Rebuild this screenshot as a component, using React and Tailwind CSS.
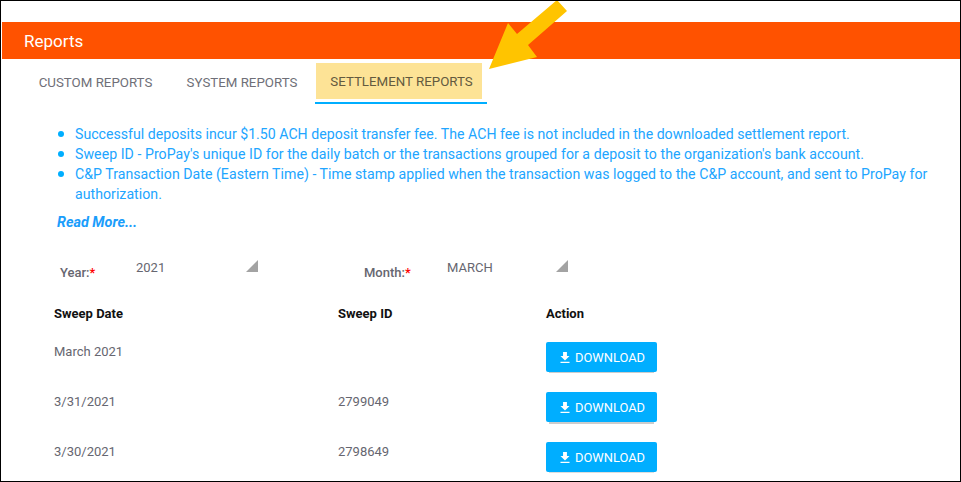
import React from "react";

const font = "font-['Roboto','Liberation_Sans',sans-serif]";

function DownloadButton({ shadow }) {
  return (
    <button className={`flex h-[30px] w-[111px] items-center justify-center gap-[5px] rounded-[2px] bg-[#00aeff] pl-[2px] pt-[1px] text-[12.9px] text-white ${shadow}`}>
      <svg width="10" height="11" viewBox="5 3 14 17" fill="white" aria-hidden="true">
        <path d="M19 9h-4V3H9v6H5l7 7 7-7zM5 18v2h14v-2H5z" />
      </svg>
      <span>DOWNLOAD</span>
    </button>
  );
}

const rows = [
  { date: "March 2021", id: "", shadow: "shadow-[0_4px_0_-3px_#cccccc]" },
  { date: "3/31/2021", id: "2799049", shadow: "shadow-[0_5px_0_-3px_#cccccc]" },
  { date: "3/30/2021", id: "2798649", shadow: "shadow-[0_4px_0_-3px_#dddddd]" },
];

function Bullet({ tracking, children }) {
  return (
    <li className={`flex ${tracking}`}>
      <span className="mr-[11.5px] mt-[7px] h-[5.5px] w-[5.5px] shrink-0 rounded-full bg-[#00aeff]" />
      <span>{children}</span>
    </li>
  );
}

export default function App() {
  return (
    <div className={`relative h-[482px] w-[961px] overflow-hidden border border-black bg-white ${font}`}>
      <span className="absolute left-[22px] top-[-1px] h-[1px] w-[4px] bg-[#b8b8c8]" />
      <div className="ml-[1px] mt-[21px] flex h-[37px] items-center bg-[#ff5200] pl-[22px] pt-[3px] text-[17px] text-white">Reports</div>

      <div className="flex h-[45px] pl-[21px] text-[13.3px] text-[#6f6f78]">
        <div className="flex w-[147px] items-center justify-center pt-[3px]">CUSTOM REPORTS</div>
        <div className="flex w-[146px] items-center justify-center pt-[3px]">SYSTEM REPORTS</div>
        <div className="flex w-[172px] flex-col items-start">
          <div className="ml-[1px] mt-[4px] flex h-[36px] w-[166px] items-center justify-center bg-[#fde396] pl-[5px] pt-[1px] text-[#635a3f]">SETTLEMENT REPORTS</div>
          <div className="mt-[3px] h-[2px] w-full bg-[#00aeff]" />
        </div>
      </div>

      <ul className="mt-[20px] pl-[57px] pr-[24px] text-[14.13px] leading-[20px] text-[#21a5ff]">
        <Bullet tracking="tracking-[0.01px]">Successful deposits incur $1.50 ACH deposit transfer fee. The ACH fee is not included in the downloaded settlement report.</Bullet>
        <Bullet tracking="tracking-[0.045px]">Sweep ID - ProPay's unique ID for the daily batch or the transactions grouped for a deposit to the organization's bank account.</Bullet>
        <Bullet tracking="tracking-[0.03px]">C&amp;P Transaction Date (Eastern Time) - Time stamp applied when the transaction was logged to the C&amp;P account, and sent to ProPay for authorization.</Bullet>
      </ul>

      <div className="mt-[9px] pl-[56px] text-[14.4px] font-bold italic leading-[20px] text-[#1a9dfb]">Read More...</div>

      <div className="mt-[25px] flex h-[46px] text-[13px]">
        <div className="mt-[5px] w-[77px] whitespace-nowrap pl-[59px] font-medium text-[#666670]">
          Year:<span className="text-[#f00]">*</span>
        </div>
        <div className="relative ml-[58px] w-[122px] text-[#666670]">
          2021
          <span className="absolute right-[0px] top-[2px] h-0 w-0 border-b-[12px] border-l-[12px] border-b-[#a3a3a3] border-l-transparent" />
        </div>
        <div className="ml-[106px] mt-[5px] w-[48px] whitespace-nowrap font-medium text-[#666670]">
          Month:<span className="text-[#f00]">*</span>
        </div>
        <div className="relative ml-[34px] w-[122px] pl-[1px] text-[#666670]">
          MARCH
          <span className="absolute right-[0px] top-[2px] h-0 w-0 border-b-[12px] border-l-[12px] border-b-[#a3a3a3] border-l-transparent" />
        </div>
      </div>

      <div className="grid grid-cols-[284px_208px_1fr] pl-[53px] text-[13px]">
        <div className="h-[31px] font-bold text-[#111]">Sweep Date</div>
        <div className="h-[31px] font-bold text-[#111]">Sweep ID</div>
        <div className="h-[31px] font-bold text-[#111]">Action</div>
        {rows.map((r) => (
          <React.Fragment key={r.date}>
            <div className="h-[50px] pt-[7px] text-[#666670]">{r.date}</div>
            <div className="h-[50px] pt-[7px] text-[#666670]">{r.id}</div>
            <div className="h-[50px] pt-[7px]"><DownloadButton shadow={r.shadow} /></div>
          </React.Fragment>
        ))}
      </div>

      <svg className="absolute left-[485px] top-[-1px]" width="84" height="72" viewBox="486 0 84 72" aria-hidden="true">
        <polygon fill="#ffc400" points="489,69 508,23 517,34 557,0 567,11 528,45 537,57" />
      </svg>
    </div>
  );
}
